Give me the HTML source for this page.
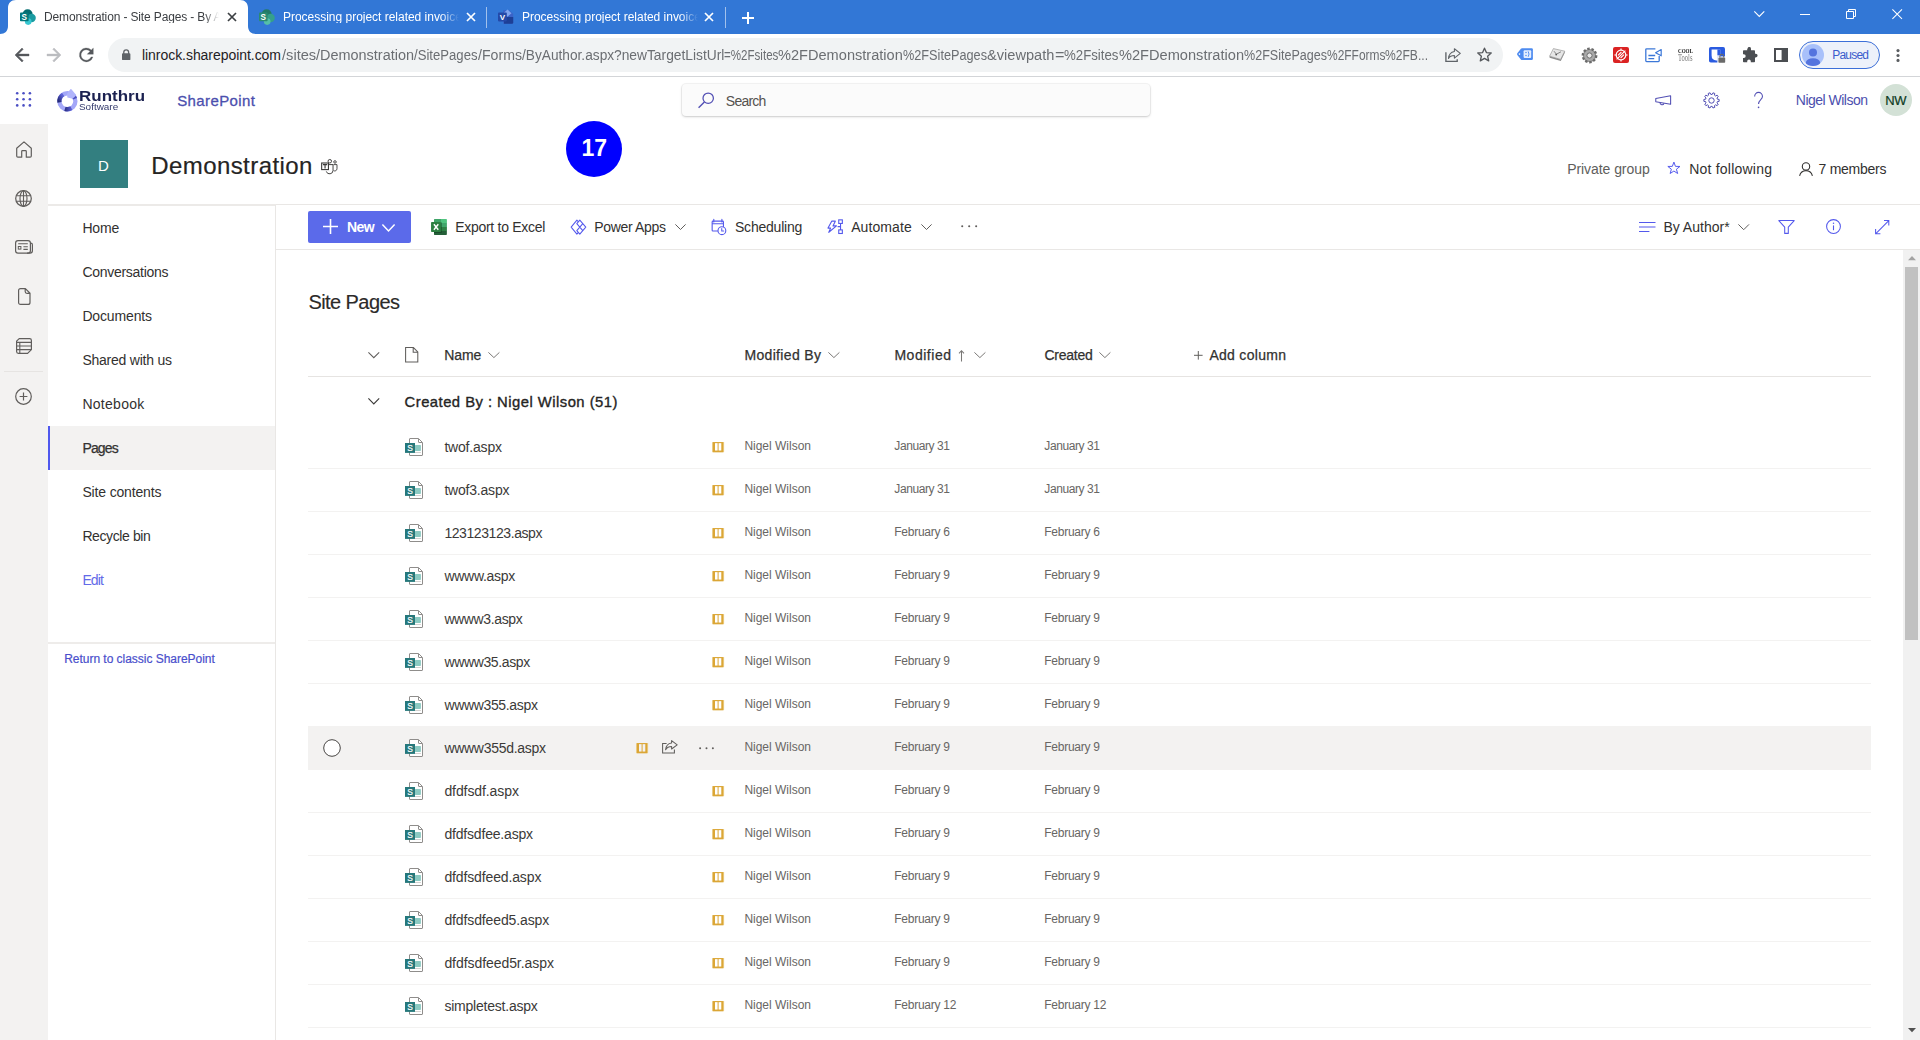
<!DOCTYPE html>
<html lang="en"><head><meta charset="utf-8"><title>Demonstration - Site Pages - By Author</title><style>
html,body{margin:0;padding:0}
body{width:1920px;height:1040px;overflow:hidden;position:relative;background:#fff;font-family:"Liberation Sans",sans-serif;}
.t{position:absolute;white-space:pre;display:block}
.a{position:absolute;display:block}
svg{position:absolute;display:block;overflow:visible}
.ln{position:absolute;height:1px;background:#edebe9}
</style></head>
<body>
<section class="browser-tabs" aria-label="Browser tabs">
<div class="a" style="left:0px;top:0px;width:1920px;height:34px;background:#3277D6"></div>
<svg style="left:0px;top:0px" width="260" height="34" viewBox="0 0 260 34" ><path d="M0 34 C5 34 8 31 8 26 L8 8 C8 3 11 0 16 0 L240 0 C245 0 248 3 248 8 L248 26 C248 31 251 34 256 34 Z" fill="#fff"/></svg>
<svg style="left:20px;top:9px" width="16" height="16" viewBox="0 0 16 16" ><circle cx="7.6" cy="5.2" r="5" fill="#036C70"/><circle cx="11.6" cy="9" r="4.2" fill="#1A9BA1"/><circle cx="8.2" cy="12.6" r="3.3" fill="#37C6D0"/><rect x="0" y="3.6" width="8.6" height="8.6" rx="0.8" fill="#03787C"/><text x="4.3" y="10.9" font-size="8.2" font-weight="700" text-anchor="middle" fill="#fff" font-family="Liberation Sans, sans-serif">S</text></svg>
<svg style="left:258.5px;top:9px" width="16" height="16" viewBox="0 0 16 16" ><circle cx="7.6" cy="5.2" r="5" fill="#237a66"/><circle cx="11.6" cy="9" r="4.2" fill="#35a08a"/><circle cx="8.2" cy="12.6" r="3.3" fill="#55bfa8"/><rect x="0" y="3.6" width="8.6" height="8.6" rx="0.8" fill="#2b8b72"/><text x="4.3" y="10.9" font-size="8.2" font-weight="700" text-anchor="middle" fill="#fff" font-family="Liberation Sans, sans-serif">S</text></svg>
<svg style="left:497.5px;top:9px" width="16" height="16" viewBox="0 0 16 16" ><path d="M5 1.2 H11.2 L15.2 5 V13.6 Q15.2 14.8 14 14.8 H5 Z" fill="#3A63C8"/><path d="M9.5 0.6 L13.5 4.2 L9.5 7.8 L5.5 4.2Z" fill="#7FA3EE"/><path d="M6 8 H15.2 V13.6 Q15.2 14.8 14 14.8 H6 Z" fill="#1D3F96"/><rect x="0" y="3.6" width="8.8" height="8.8" rx="0.8" fill="#2449A8"/><text x="4.4" y="10.9" font-size="8" font-weight="700" text-anchor="middle" fill="#fff" font-family="Liberation Sans, sans-serif">V</text></svg>
<span class="t" style="left:44px;top:10.84px;font-size:12px;line-height:12px;color:#3b3e42;letter-spacing:-0.14px;width:176px;-webkit-mask-image:linear-gradient(90deg,#000 0,#000 160px,transparent 175px);mask-image:linear-gradient(90deg,#000 0,#000 160px,transparent 175px);overflow:hidden;">Demonstration - Site Pages - By Author</span>
<span class="t" style="left:283px;top:10.84px;font-size:12px;line-height:12px;color:#ffffff;letter-spacing:-0.018px;width:176px;-webkit-mask-image:linear-gradient(90deg,#000 0,#000 158px,transparent 176px);mask-image:linear-gradient(90deg,#000 0,#000 158px,transparent 176px);overflow:hidden;">Processing project related invoices</span>
<span class="t" style="left:522px;top:10.84px;font-size:12px;line-height:12px;color:#ffffff;letter-spacing:-0.018px;width:176px;-webkit-mask-image:linear-gradient(90deg,#000 0,#000 158px,transparent 176px);mask-image:linear-gradient(90deg,#000 0,#000 158px,transparent 176px);overflow:hidden;">Processing project related invoices</span>
<svg style="left:228.2px;top:13px" width="8" height="8" viewBox="0 0 8 8" ><path d="M0 0 L8 8 M8 0 L0 8" stroke="#3c4043" stroke-width="1.7" fill="none"/></svg>
<svg style="left:467px;top:13px" width="8" height="8" viewBox="0 0 8 8" ><path d="M0 0 L8 8 M8 0 L0 8" stroke="#ffffff" stroke-width="1.7" fill="none"/></svg>
<svg style="left:705.4px;top:13px" width="8" height="8" viewBox="0 0 8 8" ><path d="M0 0 L8 8 M8 0 L0 8" stroke="#ffffff" stroke-width="1.7" fill="none"/></svg>
<div class="a" style="left:486px;top:7px;width:1px;height:20.5px;background:rgba(255,255,255,.55)"></div>
<div class="a" style="left:725px;top:7px;width:1px;height:20.5px;background:rgba(255,255,255,.55)"></div>
<svg style="left:741.5px;top:11.5px" width="12" height="12" viewBox="0 0 12 12" ><path d="M6 0 V12 M0 6 H12" stroke="#fff" stroke-width="2" fill="none"/></svg>
<svg style="left:1754px;top:11px" width="10.6" height="6" viewBox="0 0 10.6 6" ><path d="M0.3 0.4 L5.3 5.5 L10.3 0.4" stroke="#fff" stroke-width="1.1" fill="none"/></svg>
<div class="a" style="left:1800px;top:14px;width:10px;height:1px;background:#fff"></div>
<svg style="left:1846px;top:9px" width="10" height="10" viewBox="0 0 10 10" ><path d="M0.5 2.5 H7.5 V9.5 H0.5 Z M2.5 2.5 V0.5 H9.5 V7.5 H7.5" stroke="#fff" stroke-width="1" fill="none"/></svg>
<svg style="left:1891.8px;top:8.8px" width="10.4" height="10.4" viewBox="0 0 10.4 10.4" ><path d="M0.4 0.4 L10 10 M10 0.4 L0.4 10" stroke="#fff" stroke-width="1.05" fill="none"/></svg>
</section>
<section class="browser-toolbar" aria-label="Browser toolbar">
<div class="a" style="left:0px;top:76px;width:1920px;height:1px;background:#d3d5d8"></div>
<svg style="left:15px;top:48px" width="14" height="14" viewBox="0 0 14 14" ><path d="M14 6.1 H3.4 L8.2 1.3 L7 0 L0 7 L7 14 L8.2 12.7 L3.4 7.9 H14 Z" fill="#55585c" stroke="#55585c" stroke-width="0.45" stroke-linejoin="round"/></svg>
<svg style="left:47px;top:48px" width="14" height="14" viewBox="0 0 14 14" ><path d="M0 6.1 H10.6 L5.8 1.3 L7 0 L14 7 L7 14 L5.8 12.7 L10.6 7.9 H0 Z" fill="#bbbdc0" stroke="#bbbdc0" stroke-width="0.45" stroke-linejoin="round"/></svg>
<svg style="left:78.9px;top:47.8px" width="14.3" height="14.3" viewBox="0 0 15 15" ><path d="M12.9 2.2 A7.3 7.3 0 1 0 14.6 9.4 H12.7 A5.5 5.5 0 1 1 11.6 3.5 L8.6 6.5 H15 V0.1 Z" fill="#55585c" stroke="#55585c" stroke-width="0.3"/></svg>
<div class="a" style="left:108px;top:38px;width:1395px;height:34px;background:#f1f3f4;border-radius:17px"></div>
<svg style="left:121.9px;top:49px" width="8.4" height="11.6" viewBox="0 0 9 11.8" ><path d="M1.2 4.3 V3.1 A3.3 3.1 0 0 1 7.8 3.1 V4.3 H8 Q9 4.3 9 5.3 V10.6 Q9 11.6 8 11.6 H1 Q0 11.6 0 10.6 V5.3 Q0 4.3 1 4.3 Z M2.6 4.3 H6.4 V3.1 A1.9 1.8 0 0 0 2.6 3.1 Z" fill="#5f6368" fill-rule="evenodd"/></svg>
<span class="t" style="left:142px;top:48.15px;font-size:14px;line-height:14px;color:#1f2124;letter-spacing:-0.051px;">linrock.sharepoint.com</span>
<span class="t" style="left:281.8px;top:48.15px;font-size:14px;line-height:14px;color:#6b6e72;transform:scaleX(1.0463);transform-origin:0 0;">/sites</span>
<span class="t" style="left:316px;top:48.15px;font-size:14px;line-height:14px;color:#6b6e72;transform:scaleX(1.0323);transform-origin:0 0;">/Demonstration</span>
<span class="t" style="left:414px;top:48.15px;font-size:14px;line-height:14px;color:#6b6e72;transform:scaleX(0.9377);transform-origin:0 0;">/SitePages</span>
<span class="t" style="left:477.5px;top:48.15px;font-size:14px;line-height:14px;color:#6b6e72;transform:scaleX(1.0100);transform-origin:0 0;">/Forms</span>
<span class="t" style="left:521.5px;top:48.15px;font-size:14px;line-height:14px;color:#6b6e72;transform:scaleX(0.9780);transform-origin:0 0;">/ByAuthor.aspx</span>
<span class="t" style="left:613.6px;top:48.15px;font-size:14px;line-height:14px;color:#6b6e72;transform:scaleX(0.9852);transform-origin:0 0;">?newTargetListUrl</span>
<span class="t" style="left:724px;top:48.15px;font-size:14px;line-height:14px;color:#6b6e72;transform:scaleX(0.8274);transform-origin:0 0;">=%2Fsites</span>
<span class="t" style="left:778.4px;top:48.15px;font-size:14px;line-height:14px;color:#6b6e72;transform:scaleX(1.0415);transform-origin:0 0;">%2FDemonstration</span>
<span class="t" style="left:903.2px;top:48.15px;font-size:14px;line-height:14px;color:#6b6e72;transform:scaleX(0.9070);transform-origin:0 0;">%2FSitePages</span>
<span class="t" style="left:987.2px;top:48.15px;font-size:14px;line-height:14px;color:#6b6e72;transform:scaleX(1.0419);transform-origin:0 0;">&amp;viewpath</span>
<span class="t" style="left:1054.5px;top:48.15px;font-size:14px;line-height:14px;color:#6b6e72;transform:scaleX(1.1603);transform-origin:0 0;">=</span>
<span class="t" style="left:1064px;top:48.15px;font-size:14px;line-height:14px;color:#6b6e72;transform:scaleX(0.9465);transform-origin:0 0;">%2Fsites</span>
<span class="t" style="left:1118.5px;top:48.15px;font-size:14px;line-height:14px;color:#6b6e72;transform:scaleX(1.0432);transform-origin:0 0;">%2FDemonstration</span>
<span class="t" style="left:1243.5px;top:48.15px;font-size:14px;line-height:14px;color:#6b6e72;transform:scaleX(0.8962);transform-origin:0 0;">%2FSitePages</span>
<span class="t" style="left:1326.5px;top:48.15px;font-size:14px;line-height:14px;color:#6b6e72;transform:scaleX(0.8546);transform-origin:0 0;">%2FForms</span>
<span class="t" style="left:1385px;top:48.15px;font-size:14px;line-height:14px;color:#6b6e72;transform:scaleX(0.8635);transform-origin:0 0;">%2FB...</span>
<svg style="left:1445.4px;top:48px" width="16" height="15" viewBox="0 0 16 15" ><path d="M0.9 4.2 V13.4 H12.2 V11.3" stroke="#5f6368" stroke-width="1.35" fill="none"/><path d="M9.4 0.7 L15.3 5.4 L9.4 10.1 V7.5 C6.6 7.5 4.6 8.3 3.5 10.5 C3.8 6.7 6 4.1 9.4 3.5 Z" stroke="#5f6368" stroke-width="1.1" fill="none" stroke-linejoin="round"/></svg>
<svg style="left:1477.3px;top:47px" width="15" height="15" viewBox="0 0 15 15" ><path d="M7.5 1.2 L9.4 5.6 L14.2 6 L10.6 9.2 L11.7 13.9 L7.5 11.4 L3.3 13.9 L4.4 9.2 L0.8 6 L5.6 5.6 Z" stroke="#55585c" stroke-width="1.35" fill="none" stroke-linejoin="round"/></svg>
<svg style="left:1517px;top:48.4px" width="16" height="12.4" viewBox="0 0 16 12.4" ><path d="M5 0.2 H14.6 Q15.9 0.2 15.9 1.5 V10.7 Q15.9 12 14.6 12 H5 Q4.3 12 3.9 11.5 L0.3 6.9 Q-0.2 6.1 0.3 5.3 L3.9 0.7 Q4.3 0.2 5 0.2 Z" fill="#4d8bf0"/><circle cx="2.5" cy="6.1" r="0.8" fill="#fff"/><rect x="6.6" y="2.2" width="7.6" height="7.8" rx="1" fill="#e4eeff"/><circle cx="9" cy="4.6" r="0.75" fill="#4d8bf0"/><circle cx="9" cy="7.6" r="0.75" fill="#4d8bf0"/><path d="M11.2 3.4 Q12.8 6.1 11.2 8.8" stroke="#4d8bf0" stroke-width="0.95" fill="none"/></svg>
<svg style="left:1549px;top:48px" width="16.4" height="13.4" viewBox="0 0 16.4 13.4" ><path d="M4.4 0.6 L15.8 3.2 L11.6 11.4 L0.6 8.2 Z" fill="#e6e6e6" stroke="#9a9a9a" stroke-width="0.7"/><path d="M0.6 8.2 L11.6 11.4 L15.8 3.2 L15.8 4.8 L11.8 13 L0.6 9.8 Z" fill="#8c8c8c"/><path d="M5 3.2 L7.4 6.2 L12 3.8" stroke="#777" stroke-width="0.9" fill="none"/><circle cx="7.2" cy="6.6" r="0.9" fill="#555"/></svg>
<svg style="left:1581px;top:47px" width="17" height="17" viewBox="0 0 17 17" ><circle cx="8.5" cy="8.5" r="6.6" fill="#8f8f8f" stroke="#6b6b6b" stroke-width="2.6" stroke-dasharray="2.4 1.7"/><circle cx="8.5" cy="8.5" r="5.4" fill="#a9a9a9"/><circle cx="8.5" cy="8.5" r="2.6" fill="#e8e8e8" stroke="#6f6f6f" stroke-width="1"/></svg>
<svg style="left:1613px;top:47px" width="16" height="16" viewBox="0 0 16 16" ><rect width="16" height="16" rx="2" fill="#DB2323"/><circle cx="8" cy="8" r="4.8" stroke="#fff" stroke-width="1.2" fill="none"/><path d="M3.6 12.4 L12.4 3.6 M5 8.4 L8.4 5 M7.6 11 L11 7.6 M8 1.4 V3 M8 13 V14.6 M1.4 8 H3 M13 8 H14.6" stroke="#fff" stroke-width="1.1"/></svg>
<svg style="left:1644.6px;top:47.8px" width="17" height="14.4" viewBox="0 0 17 14.4" ><path d="M10.4 0.8 H1.6 Q0.8 0.8 0.8 1.6 V12.8 Q0.8 13.6 1.6 13.6 H13.4 Q14.2 13.6 14.2 12.8 V8" stroke="#3c78d8" stroke-width="1.3" fill="none"/><path d="M16.2 1.6 V7.8 L10.6 4.7 Z" stroke="#3c78d8" stroke-width="1.2" fill="#fff" stroke-linejoin="round"/><path d="M3.4 7.5 H10.2 M3.4 10.7 H9.2" stroke="#3c78d8" stroke-width="1.3"/></svg>
<span class="t" style="left:1677.6px;top:47.6px;font-size:6.2px;line-height:6.2px;font-weight:700;color:#111;transform:scaleX(0.82);transform-origin:0 0;font-family:'Liberation Serif',serif">COOL</span>
<span class="t" style="left:1678px;top:53.6px;font-size:9.4px;line-height:9.4px;color:#7a7a7a;transform:scaleX(0.70);transform-origin:0 0;font-family:'Liberation Serif',serif">Tools</span>
<svg style="left:1709px;top:47px" width="16.4" height="16" viewBox="0 0 16.4 16" ><rect x="0" y="0" width="16" height="15.6" rx="1.8" fill="#2a5be0"/><path d="M2.6 2.4 H11.2 V9.4 H8.6 V13.4 H7.4 Q2.6 13.4 2.6 8.6 Z" fill="#fff"/><rect x="8.4" y="2.4" width="2.8" height="6" fill="#2a5be0"/><rect x="8.4" y="9.4" width="8" height="6.6" fill="#fff"/><rect x="9.4" y="10.4" width="6.8" height="5.4" rx="0.7" fill="#6a6a6a"/><path d="M10.9 10.4 V9.2 A1.9 1.9 0 0 1 14.7 9.2 V10.4" stroke="#6a6a6a" stroke-width="1.1" fill="none"/></svg>
<svg style="left:1741.5px;top:47.5px" width="15" height="15" viewBox="0 0 15 15" ><path d="M5.6 0.4 A1.7 1.7 0 0 1 9 0.9 V2.2 H12.2 Q13 2.2 13 3 V5.8 H13.8 A1.8 1.8 0 0 1 13.8 9.4 H13 V13.4 Q13 14.2 12.2 14.2 H8.8 V13.2 A1.8 1.8 0 0 0 5.2 13.2 V14.2 H1.8 Q1 14.2 1 13.4 V10 H1.8 A1.9 1.9 0 0 0 1.8 6.2 H1 V3 Q1 2.2 1.8 2.2 H5.2 V0.9 Z" fill="#4b4e52"/></svg>
<svg style="left:1774px;top:48px" width="14" height="14" viewBox="0 0 14 14" ><path d="M1 1 H13 V13 H1 Z" stroke="#4b4e52" stroke-width="2" fill="none"/><rect x="7.6" y="1" width="5.4" height="12" fill="#4b4e52"/></svg>
<div class="a" style="left:1799px;top:41px;width:81px;height:27.5px;background:#edf1fa;border:1.2px solid #3c6fd8;border-radius:14px;box-sizing:border-box"></div>
<svg style="left:1802px;top:43.8px" width="22" height="22" viewBox="0 0 22 22" ><defs><clipPath id="avc"><circle cx="11" cy="11" r="11"/></clipPath></defs><circle cx="11" cy="11" r="11" fill="#a8c0fa"/><circle cx="11" cy="8.4" r="4" fill="#5474de"/><ellipse cx="11" cy="19" rx="7.2" ry="4.8" fill="#5474de" clip-path="url(#avc)"/></svg>
<span class="t" style="left:1832.3px;top:49.14px;font-size:12px;line-height:12px;color:#3a5ccc;letter-spacing:-0.801px;">Paused</span>
<svg style="left:1896.4px;top:49px" width="4" height="13" viewBox="0 0 4 13" ><circle cx="2" cy="1.6" r="1.55" fill="#5a5d61"/><circle cx="2" cy="6.5" r="1.55" fill="#5a5d61"/><circle cx="2" cy="11.4" r="1.55" fill="#5a5d61"/></svg>
</section>
<section class="suite-header" aria-label="SharePoint suite bar">
<svg style="left:16px;top:92.3px" width="15.2" height="14.8" viewBox="0 0 15.2 14.8" ><circle cx="1.2" cy="1.2" r="1.3" fill="#4b4fc4"/><circle cx="1.2" cy="7.3" r="1.3" fill="#4b4fc4"/><circle cx="1.2" cy="13.4" r="1.3" fill="#4b4fc4"/><circle cx="7.55" cy="1.2" r="1.3" fill="#4b4fc4"/><circle cx="7.55" cy="7.3" r="1.3" fill="#4b4fc4"/><circle cx="7.55" cy="13.4" r="1.3" fill="#4b4fc4"/><circle cx="13.9" cy="1.2" r="1.3" fill="#4b4fc4"/><circle cx="13.9" cy="7.3" r="1.3" fill="#4b4fc4"/><circle cx="13.9" cy="13.4" r="1.3" fill="#4b4fc4"/></svg>
<svg style="left:56.5px;top:88.5px" width="21" height="23" viewBox="0 0 21 23" ><defs><linearGradient id="rg1" x1="0" y1="1" x2="0.6" y2="0"><stop offset="0" stop-color="#232878"/><stop offset="1" stop-color="#5d62d6"/></linearGradient><linearGradient id="rg2" x1="0" y1="0" x2="1" y2="0"><stop offset="0" stop-color="#2a2f86"/><stop offset="1" stop-color="#5c61d4"/></linearGradient></defs><circle cx="10.4" cy="12.25" r="8" stroke="#a3a7f8" stroke-width="4.3" fill="none"/><path d="M2.48 13.36 A8 8 0 0 1 6.16 5.47" stroke="url(#rg1)" stroke-width="4.3" fill="none"/><path d="M7.93 19.86 A8 8 0 0 0 14.40 19.18" stroke="url(#rg2)" stroke-width="4.3" fill="none"/><path d="M16.53 7.11 A8 8 0 0 1 18.01 9.78" stroke="#4a4fc0" stroke-width="4.3" fill="none"/><path d="M10 4.6 L13.4 0.3 Q14 -0.2 14.6 0.5 L19.4 6.2 L15.6 9.8 L10.4 8.6 Z" fill="#b0b4fb"/></svg>
<span class="t" style="left:78.6px;top:89.31px;font-size:14.4px;line-height:14.4px;color:#1b2150;font-weight:700;transform:scaleX(1.1796);transform-origin:0 0;">Runthru</span>
<span class="t" style="left:79.2px;top:103.25px;font-size:8.8px;line-height:8.8px;color:#333a6c;transform:scaleX(1.1291);transform-origin:0 0;">Software</span>
<span class="t" style="left:177.2px;top:92.9px;font-size:15px;line-height:15px;color:#4b4fae;letter-spacing:0.398px;-webkit-text-stroke:0.3px #4b4fae;">SharePoint</span>
<div class="a" style="left:682px;top:84px;width:468px;height:32px;background:#fbfbfb;border-radius:4px;box-shadow:0 0 0 1px rgba(0,0,0,.04),0 1px 2.5px rgba(0,0,0,.18)"></div>
<svg style="left:697.5px;top:92px" width="16.5" height="16.5" viewBox="0 0 16.5 16.5" ><circle cx="10.2" cy="6.2" r="5.2" stroke="#524fb4" stroke-width="1.25" fill="none"/><path d="M6.4 10 L0.6 15.8" stroke="#524fb4" stroke-width="1.4"/></svg>
<span class="t" style="left:725.8px;top:94.45px;font-size:14px;line-height:14px;color:#55524f;letter-spacing:-0.752px;">Search</span>
<svg style="left:1654.6px;top:94.6px" width="16.4" height="11.6" viewBox="0 0 17 12" ><path d="M16.2 0.8 V9.6 L0.8 6.9 V3.6 Z" stroke="#524fb4" stroke-width="1.1" fill="none" stroke-linejoin="round"/><path d="M5.2 7.8 A2.1 2.1 0 0 0 9.3 8.6" stroke="#524fb4" stroke-width="1.1" fill="none"/></svg>
<svg style="left:1702.6px;top:91.5px" width="17" height="17" viewBox="0 0 17 17" ><path d="M9.94 0.84 L11.78 1.43 L11.46 3.18 L12.55 3.97 L14.11 3.13 L15.25 4.69 L13.96 5.91 L14.38 7.20 L16.14 7.43 L16.14 9.37 L14.38 9.60 L13.96 10.89 L15.25 12.11 L14.11 13.67 L12.55 12.83 L11.46 13.62 L11.78 15.37 L9.94 15.96 L9.18 14.36 L7.82 14.36 L7.06 15.96 L5.22 15.37 L5.54 13.62 L4.45 12.83 L2.89 13.67 L1.75 12.11 L3.04 10.89 L2.62 9.60 L0.86 9.37 L0.86 7.43 L2.62 7.20 L3.04 5.91 L1.75 4.69 L2.89 3.13 L4.45 3.97 L5.54 3.18 L5.22 1.43 L7.06 0.84 L7.82 2.44 L9.18 2.44Z" stroke="#524fb4" stroke-width="1.0" fill="none" stroke-linejoin="round"/><circle cx="8.5" cy="8.5" r="2.7" stroke="#524fb4" stroke-width="1.0" fill="none"/></svg>
<svg style="left:1753.8px;top:92px" width="9.3" height="16.5" viewBox="0 0 10 16.5" preserveAspectRatio="none"><path d="M0.7 4.6 A4.2 4.2 0 0 1 9.1 4.6 C9.1 7.6 4.9 7.8 4.9 12" stroke="#524fb4" stroke-width="1.15" fill="none"/><circle cx="4.9" cy="15.3" r="0.9" fill="#524fb4"/></svg>
<span class="t" style="left:1795.8px;top:93.35px;font-size:14px;line-height:14px;color:#4b4fae;letter-spacing:-0.51px;">Nigel Wilson</span>
<div class="a" style="left:1880px;top:84px;width:32px;height:32px;background:#d3e1d6;border-radius:50%"></div>
<span class="t" style="left:1885.2px;top:93.9px;font-size:13px;line-height:13px;color:#0c3a1e;letter-spacing:-0.272px;-webkit-text-stroke:0.2px #0c3a1e;">NW</span>
</section>
<section class="app-rail" aria-label="App bar">
<div class="a" style="left:0px;top:124px;width:48px;height:916px;background:#f3f2f1"></div>
<svg style="left:15.8px;top:140.6px" width="16" height="17" viewBox="0 0 16 17" ><path d="M0.7 7.2 L8 0.9 L15.3 7.2 V15 Q15.3 16.2 14.1 16.2 H10.3 V10.4 Q10.3 9.6 9.5 9.6 H6.5 Q5.7 9.6 5.7 10.4 V16.2 H1.9 Q0.7 16.2 0.7 15 Z" stroke="#605e5c" stroke-width="1.2" fill="none" stroke-linejoin="round"/></svg>
<svg style="left:15.1px;top:189.9px" width="17" height="17" viewBox="0 0 17 17" ><circle cx="8.5" cy="8.5" r="7.8" stroke="#605e5c" stroke-width="1.25" fill="none"/><ellipse cx="8.5" cy="8.5" rx="3.5" ry="7.8" stroke="#605e5c" stroke-width="1.15" fill="none"/><path d="M1.3 5.8 H15.7 M1.3 11.2 H15.7 M8.5 0.7 V16.3" stroke="#605e5c" stroke-width="1.1"/></svg>
<svg style="left:15px;top:240.3px" width="18" height="14" viewBox="0 0 18 14" ><rect x="0.6" y="0.6" width="14.8" height="12.6" rx="2.4" stroke="#605e5c" stroke-width="1.2" fill="none"/><path d="M15.4 3.2 H15.8 Q17.4 3.2 17.4 4.8 V10.8 Q17.4 13.2 15 13.2 H12" stroke="#605e5c" stroke-width="1.2" fill="none"/><rect x="3.3" y="6.5" width="2.6" height="2.6" stroke="#605e5c" stroke-width="1" fill="none"/><path d="M3.2 3.8 H12.8 M8.4 6.8 H12.8 M8.4 9.4 H12.8" stroke="#605e5c" stroke-width="1.1"/></svg>
<svg style="left:17.5px;top:288.1px" width="12.6" height="17" viewBox="0 0 12.6 17" ><path d="M2.6 0.6 H7.4 L12 5.2 V14.4 Q12 16.4 10 16.4 H2.6 Q0.6 16.4 0.6 14.4 V2.6 Q0.6 0.6 2.6 0.6 Z M7.2 0.8 V3.6 Q7.2 5.4 9 5.4 H11.8" stroke="#605e5c" stroke-width="1.2" fill="none" stroke-linejoin="round"/></svg>
<svg style="left:16px;top:337.7px" width="16" height="16" viewBox="0 0 16 16" ><path d="M3.2 0.6 H13.6 Q15.4 0.6 15.4 2.4 V11.6 L11.6 15.4 H2.4 Q0.6 15.4 0.6 13.6 V3.2 Z" stroke="#605e5c" stroke-width="1.2" fill="none" stroke-linejoin="round"/><path d="M0.8 4.4 H15.2 M0.8 8 H15.2 M0.8 11.6 H15 M3.8 4.4 V15.2" stroke="#605e5c" stroke-width="1.1" fill="none"/></svg>
<div class="a" style="left:4px;top:371px;width:39px;height:1px;background:#e6e4e2"></div>
<svg style="left:14.9px;top:387.9px" width="17" height="17" viewBox="0 0 17 17" ><circle cx="8.5" cy="8.5" r="7.8" stroke="#605e5c" stroke-width="1.2" fill="none"/><path d="M8.5 4.6 V12.4 M4.6 8.5 H12.4" stroke="#605e5c" stroke-width="1.2"/></svg>
</section>
<section class="site-header" aria-label="Site header">
<div class="a" style="left:48px;top:204px;width:1872px;height:1px;background:#e9e7e5"></div>
<div class="a" style="left:48px;top:204px;width:228px;height:2px;background:#eceae8"></div>
<div class="a" style="left:80px;top:140px;width:48px;height:48px;background:#337f80"></div>
<span class="t" style="left:98.1px;top:157.8px;font-size:15px;line-height:15px;color:#ffffff;">D</span>
<span class="t" style="left:151.2px;top:153.68px;font-size:24px;line-height:24px;color:#252423;letter-spacing:0.427px;-webkit-text-stroke:0.2px #252423;">Demonstration</span>
<svg style="left:321px;top:158.6px" width="16.6" height="15.4" viewBox="0 0 16.6 15.4" ><circle cx="8.8" cy="2.25" r="1.75" stroke="#3b3a39" stroke-width="0.95" fill="none"/><circle cx="14" cy="2.95" r="1.25" stroke="#3b3a39" stroke-width="0.9" fill="none"/><path d="M7.9 5.6 H12.05 V11.4 A3.45 3.45 0 0 1 5.3 12.4" stroke="#3b3a39" stroke-width="0.95" fill="none"/><path d="M12.5 5.6 H16 V9.7 A2.2 2.2 0 0 1 12.6 11.6" stroke="#3b3a39" stroke-width="0.9" fill="none"/><rect x="0.65" y="4" width="6.8" height="6.6" fill="#fff" stroke="#3b3a39" stroke-width="1.1"/><path d="M1.9 5.7 H6.2 M4.05 5.7 V9.5" stroke="#3b3a39" stroke-width="1.15" fill="none"/></svg>
<div class="a" style="left:566px;top:120.8px;width:56px;height:56px;background:#0000ff;border-radius:50%"></div>
<span class="t" style="left:581.4px;top:136.73px;font-size:23px;line-height:23px;color:#ffffff;font-weight:700;">17</span>
<span class="t" style="left:1567.2px;top:161.75px;font-size:14px;line-height:14px;color:#605e5c;letter-spacing:-0.065px;">Private group</span>
<svg style="left:1666.5px;top:161.4px" width="13.8" height="13.6" viewBox="0 0 14.5 14" ><path d="M7.25 1 L8.9 5.5 L13.6 5.6 L9.9 8.5 L11.2 13 L7.25 10.4 L3.3 13 L4.6 8.5 L0.9 5.6 L5.6 5.5 Z" stroke="#5459ec" stroke-width="1.05" fill="none" stroke-linejoin="miter"/></svg>
<span class="t" style="left:1689.2px;top:161.75px;font-size:14px;line-height:14px;color:#323130;letter-spacing:0.22px;">Not following</span>
<svg style="left:1799px;top:161.8px" width="14" height="14" viewBox="0 0 14 14" ><circle cx="7" cy="4.4" r="3.7" stroke="#323130" stroke-width="1.1" fill="none"/><path d="M0.6 13.8 A6.6 6.6 0 0 1 13.4 13.8" stroke="#323130" stroke-width="1.1" fill="none"/></svg>
<span class="t" style="left:1818.6px;top:161.75px;font-size:14px;line-height:14px;color:#323130;letter-spacing:-0.279px;">7 members</span>
</section>
<section class="left-nav" aria-label="Site navigation">
<div class="a" style="left:275px;top:205px;width:1px;height:835px;background:#e9e7e5"></div>
<div class="a" style="left:48px;top:426px;width:227px;height:44px;background:#f3f2f1"></div>
<div class="a" style="left:48px;top:426px;width:2px;height:44px;background:#4f58ee"></div>
<span class="t" style="left:82.4px;top:220.75px;font-size:14px;line-height:14px;color:#323130;letter-spacing:-0.153px;">Home</span>
<span class="t" style="left:82.4px;top:264.75px;font-size:14px;line-height:14px;color:#323130;letter-spacing:-0.275px;">Conversations</span>
<span class="t" style="left:82.4px;top:308.75px;font-size:14px;line-height:14px;color:#323130;letter-spacing:-0.139px;">Documents</span>
<span class="t" style="left:82.4px;top:352.75px;font-size:14px;line-height:14px;color:#323130;letter-spacing:-0.231px;">Shared with us</span>
<span class="t" style="left:82.4px;top:396.75px;font-size:14px;line-height:14px;color:#323130;letter-spacing:0.28px;">Notebook</span>
<span class="t" style="left:82.4px;top:440.75px;font-size:14px;line-height:14px;color:#323130;letter-spacing:-0.826px;-webkit-text-stroke:0.25px #323130;">Pages</span>
<span class="t" style="left:82.4px;top:484.75px;font-size:14px;line-height:14px;color:#323130;letter-spacing:-0.153px;">Site contents</span>
<span class="t" style="left:82.4px;top:528.75px;font-size:14px;line-height:14px;color:#323130;letter-spacing:-0.397px;">Recycle bin</span>
<span class="t" style="left:82.4px;top:572.75px;font-size:14px;line-height:14px;color:#636ae8;letter-spacing:-0.908px;">Edit</span>
<div class="a" style="left:48px;top:642px;width:227px;height:2px;background:#eeecea"></div>
<span class="t" style="left:64.2px;top:653.14px;font-size:12px;line-height:12px;color:#4a4fcc;letter-spacing:-0.03px;-webkit-text-stroke:0.2px #4a4fcc;">Return to classic SharePoint</span>
</section>
<section class="command-bar" aria-label="Command bar">
<div class="a" style="left:276px;top:249px;width:1644px;height:1px;background:#e9e7e5"></div>
<div class="a" style="left:308px;top:211px;width:103px;height:32px;background:#5B6AEA;border-radius:2px"></div>
<svg style="left:323px;top:219px" width="15" height="15" viewBox="0 0 15 15" ><path d="M7.5 0 V15 M0 7.5 H15" stroke="#fff" stroke-width="1.6"/></svg>
<span class="t" style="left:347px;top:220.15px;font-size:14px;line-height:14px;color:#ffffff;font-weight:700;letter-spacing:-0.598px;">New</span>
<svg style="left:382.4px;top:224.2px" width="13" height="7.4" viewBox="0 0 13 7.4" ><path d="M0.4 0.4 L6.5 6.9 L12.6 0.4" stroke="#fff" stroke-width="1.5" fill="none"/></svg>
<svg style="left:431px;top:219px" width="16" height="16" viewBox="0 0 16 16" ><defs><clipPath id="xlc"><rect x="2.95" y="0" width="12.95" height="15.9" rx="0.7"/></clipPath></defs><g clip-path="url(#xlc)"><rect x="2.95" y="0" width="7.05" height="4" fill="#3fa468"/><rect x="10" y="0" width="6" height="4" fill="#50c47f"/><rect x="2.95" y="4" width="7.05" height="4" fill="#2b8349"/><rect x="10" y="4" width="6" height="4" fill="#41a66b"/><rect x="2.95" y="8" width="7.05" height="4" fill="#1e6435"/><rect x="10" y="8" width="6" height="4" fill="#2e8145"/><rect x="2.95" y="12" width="13" height="4" fill="#245f38"/><rect x="2.95" y="12.9" width="7.8" height="0.9" fill="#143d22" opacity="0.7"/><rect x="9.9" y="3.4" width="0.9" height="9.6" fill="#143d22" opacity="0.55"/></g><rect x="0.05" y="2.95" width="9.85" height="9.95" rx="0.7" fill="#2c7f41"/><path d="M2.9 5.2 L7.3 10.8 M7.3 5.2 L2.9 10.8" stroke="#fff" stroke-width="1.45"/></svg>
<span class="t" style="left:455.2px;top:220.15px;font-size:14px;line-height:14px;color:#323130;letter-spacing:-0.283px;">Export to Excel</span>
<svg style="left:569.5px;top:218.8px" width="17" height="16.4" viewBox="0 0 17 16.4" ><path d="M8.1 2.5 L6.9 1.1 L1.15 8.1 L6.9 15.15 L8.1 13.7 M6.8 4.6 L9.8 1.1 L15.8 8.1 L9.8 15.15 L6.8 11.6 L12.8 4.6 M6.8 4.6 L12.8 11.6" stroke="#5459ec" stroke-width="1.05" fill="none" stroke-linejoin="round" stroke-linecap="round"/></svg>
<span class="t" style="left:594.2px;top:220.15px;font-size:14px;line-height:14px;color:#323130;letter-spacing:-0.324px;">Power Apps</span>
<svg style="left:675.4px;top:224.4px" width="11" height="6" viewBox="0 0 11 6" ><path d="M0.4 0.4 L5.5 5.5 L10.6 0.4" stroke="#605e5c" stroke-width="1" fill="none"/></svg>
<svg style="left:711.1px;top:218.8px" width="16" height="16.4" viewBox="0 0 16 16.4" ><path d="M6.6 11.95 H1.95 Q1.15 11.95 1.15 11.15 V2.95 Q1.15 2.15 1.95 2.15 H11.65 Q12.45 2.15 12.45 2.95 V7.4 M1.15 4.8 H12.45 M2.8 0.3 V2.9 M10.9 0.3 V2.9" stroke="#5459ec" stroke-width="1.1" fill="none" stroke-linecap="round"/><circle cx="10.9" cy="11.7" r="3.9" stroke="#5459ec" stroke-width="1.1" fill="#fff"/><path d="M10.75 9.5 V12 H12.7" stroke="#5459ec" stroke-width="1.05" fill="none" stroke-linecap="round"/></svg>
<span class="t" style="left:735px;top:220.15px;font-size:14px;line-height:14px;color:#323130;letter-spacing:-0.22px;">Scheduling</span>
<svg style="left:827px;top:218.8px" width="16.4" height="15.6" viewBox="0 0 16.4 15.6" ><path d="M4.7 2.15 H8.3 L6 6.9 H9.5 L1.8 13.3 L3.6 9.1 H1 Z" stroke="#5459ec" stroke-width="1.1" fill="none" stroke-linejoin="round"/><rect x="11.75" y="0.85" width="3.6" height="3.6" stroke="#5459ec" stroke-width="1.1" fill="none"/><rect x="11.75" y="10.9" width="3.6" height="3.6" stroke="#5459ec" stroke-width="1.1" fill="none"/><path d="M13.55 4.45 V10.9 M10.6 7.6 H13.55" stroke="#5459ec" stroke-width="1.1"/></svg>
<span class="t" style="left:851.2px;top:220.15px;font-size:14px;line-height:14px;color:#323130;letter-spacing:0.095px;">Automate</span>
<svg style="left:921px;top:224.4px" width="11" height="6" viewBox="0 0 11 6" ><path d="M0.4 0.4 L5.5 5.5 L10.6 0.4" stroke="#605e5c" stroke-width="1" fill="none"/></svg>
<svg style="left:960.5px;top:225.1px" width="16.4" height="2.4" viewBox="0 0 16.4 2.4" ><circle cx="1.2" cy="1.2" r="1.05" fill="#605e5c"/><circle cx="8.2" cy="1.2" r="1.05" fill="#605e5c"/><circle cx="15.2" cy="1.2" r="1.05" fill="#605e5c"/></svg>
<svg style="left:1639px;top:221.5px" width="16.5" height="10" viewBox="0 0 16.5 10" ><path d="M0 0.5 H16.5 M0 5 H16.5 M0 9.5 H10.4" stroke="#5459ec" stroke-width="1.05"/></svg>
<span class="t" style="left:1663.4px;top:219.95px;font-size:14px;line-height:14px;color:#323130;letter-spacing:0.005px;">By Author*</span>
<svg style="left:1738.4px;top:224.4px" width="11.4" height="6.2" viewBox="0 0 11.4 6.2" ><path d="M0.4 0.4 L5.7 5.7 L11 0.4" stroke="#605e5c" stroke-width="1" fill="none"/></svg>
<svg style="left:1777.6px;top:219.8px" width="17" height="14.6" viewBox="0 0 17 14.6" ><path d="M0.8 0.6 H16.2 L10.3 7.2 V13.4 H6.7 V7.2 Z" stroke="#5459ec" stroke-width="1.05" fill="none" stroke-linejoin="round"/></svg>
<svg style="left:1826px;top:219.2px" width="15" height="15" viewBox="0 0 15 15" ><circle cx="7.5" cy="7.5" r="6.9" stroke="#5459ec" stroke-width="1.05" fill="none"/><path d="M7.5 6.4 V11.2" stroke="#5459ec" stroke-width="1.1"/><circle cx="7.5" cy="4.3" r="0.75" fill="#5459ec"/></svg>
<svg style="left:1875px;top:219.6px" width="14.4" height="14.4" viewBox="0 0 14.4 14.4" ><path d="M0.6 13.8 L13.8 0.6 M9 0.6 H13.8 V5.4 M0.6 9 V13.8 H5.4" stroke="#5459ec" stroke-width="1.05" fill="none"/></svg>
<div class="a" style="left:1903px;top:250px;width:17px;height:790px;background:#f1f1f1"></div>
<div class="a" style="left:1905px;top:267px;width:13px;height:373px;background:#c1c1c1"></div>
<svg style="left:1907.5px;top:256.2px" width="8" height="4.2" viewBox="0 0 8 4.2" ><path d="M0 4.2 L4 0 L8 4.2Z" fill="#a3a3a3"/></svg>
<svg style="left:1907.5px;top:1027.5px" width="8" height="4.2" viewBox="0 0 8 4.2" ><path d="M0 0 L4 4.2 L8 0Z" fill="#505050"/></svg>
</section>
<section class="list-view" aria-label="Site Pages list">
<span class="t" style="left:308.4px;top:291.67px;font-size:20px;line-height:20px;color:#2b2a29;letter-spacing:-0.57px;-webkit-text-stroke:0.15px #2b2a29;">Site Pages</span>
<svg style="left:368.2px;top:352px" width="11.6" height="6.2" viewBox="0 0 11.6 6.2" ><path d="M0.4 0.4 L5.8 5.7 L11.2 0.4" stroke="#605e5c" stroke-width="1.05" fill="none"/></svg>
<svg style="left:404.8px;top:347px" width="13.5" height="15.6" viewBox="0 0 13.5 15.6" ><path d="M0.6 0.6 H8.4 L12.8 5 V15 H0.6 Z M8.2 0.8 V5.2 H12.6" stroke="#605e5c" stroke-width="1.05" fill="none"/></svg>
<span class="t" style="left:444.2px;top:348.05px;font-size:14px;line-height:14px;color:#323130;letter-spacing:-0.053px;-webkit-text-stroke:0.25px #323130;">Name</span>
<svg style="left:488px;top:351.9px" width="11.8" height="6.1" viewBox="0 0 11.8 6.1" ><path d="M0.4 0.4 L5.9 5.6 L11.4 0.4" stroke="#7a7876" stroke-width="1" fill="none"/></svg>
<span class="t" style="left:744.4px;top:348.05px;font-size:14px;line-height:14px;color:#323130;letter-spacing:0.344px;-webkit-text-stroke:0.25px #323130;">Modified By</span>
<svg style="left:828px;top:351.9px" width="11.8" height="6.1" viewBox="0 0 11.8 6.1" ><path d="M0.4 0.4 L5.9 5.6 L11.4 0.4" stroke="#7a7876" stroke-width="1" fill="none"/></svg>
<span class="t" style="left:894.4px;top:348.05px;font-size:14px;line-height:14px;color:#323130;letter-spacing:0.525px;-webkit-text-stroke:0.25px #323130;">Modified</span>
<svg style="left:958px;top:350px" width="7" height="11.6" viewBox="0 0 7 11.6" ><path d="M3.5 11.6 V0.8 M1 3.3 L3.5 0.7 L6 3.3" stroke="#7a7876" stroke-width="1.05" fill="none"/></svg>
<svg style="left:973.9px;top:351.9px" width="11.8" height="6.1" viewBox="0 0 11.8 6.1" ><path d="M0.4 0.4 L5.9 5.6 L11.4 0.4" stroke="#7a7876" stroke-width="1" fill="none"/></svg>
<span class="t" style="left:1044.4px;top:348.05px;font-size:14px;line-height:14px;color:#323130;letter-spacing:-0.235px;-webkit-text-stroke:0.25px #323130;">Created</span>
<svg style="left:1099.3px;top:351.9px" width="11.8" height="6.1" viewBox="0 0 11.8 6.1" ><path d="M0.4 0.4 L5.9 5.6 L11.4 0.4" stroke="#7a7876" stroke-width="1" fill="none"/></svg>
<svg style="left:1193.6px;top:350.8px" width="8.6" height="8.6" viewBox="0 0 8.6 8.6" ><path d="M4.3 0 V8.6 M0 4.3 H8.6" stroke="#605e5c" stroke-width="1"/></svg>
<span class="t" style="left:1209.4px;top:348.05px;font-size:14px;line-height:14px;color:#323130;letter-spacing:0.296px;-webkit-text-stroke:0.25px #323130;">Add column</span>
<div class="a" style="left:308px;top:376px;width:1563px;height:1px;background:#e6e4e2"></div>
<svg style="left:368.2px;top:398.1px" width="11.6" height="6.5" viewBox="0 0 11.6 6.5" ><path d="M0.4 0.4 L5.8 6 L11.2 0.4" stroke="#3b3a39" stroke-width="1.1" fill="none"/></svg>
<span class="t" style="left:404.6px;top:395.27px;font-size:14.8px;line-height:14.8px;color:#252423;letter-spacing:0.475px;-webkit-text-stroke:0.35px #252423;">Created By : Nigel Wilson (51)</span>
<div class="a" style="left:308px;top:468px;width:1563px;height:1px;background:#f3f2f1"></div>
<svg style="left:405px;top:438px" width="18" height="18" viewBox="0 0 18 18" ><path d="M5 0.5 H13.5 L17.5 4.5 V17 Q17.5 17.5 17 17.5 H5 Q4.5 17.5 4.5 17 V1 Q4.5 0.5 5 0.5 Z" fill="#fff" stroke="#8f8d8b" stroke-width="1" stroke-linejoin="round"/><path d="M13.5 0.8 V4 Q13.5 4.5 14 4.5 H17.2" stroke="#8f8d8b" stroke-width="1" fill="none"/><rect x="9.9" y="7" width="6" height="5.9" rx="0.7" fill="#8ccac2"/><path d="M10 14.5 H15.9" stroke="#c8c6c4" stroke-width="0.8"/><rect x="0" y="5" width="10" height="9.9" fill="#26787b"/><text x="5" y="12.95" font-size="8.4" font-weight="400" stroke="#fff" stroke-width="0.2" text-anchor="middle" fill="#fff" font-family="Liberation Sans, sans-serif">S</text></svg>
<span class="t" style="left:444.4px;top:440.15px;font-size:14px;line-height:14px;color:#3b3a38;letter-spacing:-0.193px;">twof.aspx</span>
<svg style="left:711.7px;top:441.8px" width="12.2" height="10.4" viewBox="0 0 12.2 10.4" ><rect x="0.1" y="0.1" width="12" height="10.1" rx="0.5" fill="#e8c678"/><rect x="1" y="0.1" width="10" height="10.1" fill="#dba636"/><rect x="3" y="1.15" width="2.6" height="7.4" fill="#fff"/><rect x="6.6" y="1.15" width="2.7" height="7.4" fill="#fff"/></svg>
<span class="t" style="left:744.4px;top:439.84px;font-size:12px;line-height:12px;color:#686664;letter-spacing:-0.008px;">Nigel Wilson</span>
<span class="t" style="left:894.3px;top:439.84px;font-size:12px;line-height:12px;color:#686664;letter-spacing:-0.408px;">January 31</span>
<span class="t" style="left:1044.3px;top:439.84px;font-size:12px;line-height:12px;color:#686664;letter-spacing:-0.408px;">January 31</span>
<div class="a" style="left:308px;top:511px;width:1563px;height:1px;background:#f3f2f1"></div>
<svg style="left:405px;top:481px" width="18" height="18" viewBox="0 0 18 18" ><path d="M5 0.5 H13.5 L17.5 4.5 V17 Q17.5 17.5 17 17.5 H5 Q4.5 17.5 4.5 17 V1 Q4.5 0.5 5 0.5 Z" fill="#fff" stroke="#8f8d8b" stroke-width="1" stroke-linejoin="round"/><path d="M13.5 0.8 V4 Q13.5 4.5 14 4.5 H17.2" stroke="#8f8d8b" stroke-width="1" fill="none"/><rect x="9.9" y="7" width="6" height="5.9" rx="0.7" fill="#8ccac2"/><path d="M10 14.5 H15.9" stroke="#c8c6c4" stroke-width="0.8"/><rect x="0" y="5" width="10" height="9.9" fill="#26787b"/><text x="5" y="12.95" font-size="8.4" font-weight="400" stroke="#fff" stroke-width="0.2" text-anchor="middle" fill="#fff" font-family="Liberation Sans, sans-serif">S</text></svg>
<span class="t" style="left:444.4px;top:483.15px;font-size:14px;line-height:14px;color:#3b3a38;letter-spacing:-0.204px;">twof3.aspx</span>
<svg style="left:711.7px;top:484.8px" width="12.2" height="10.4" viewBox="0 0 12.2 10.4" ><rect x="0.1" y="0.1" width="12" height="10.1" rx="0.5" fill="#e8c678"/><rect x="1" y="0.1" width="10" height="10.1" fill="#dba636"/><rect x="3" y="1.15" width="2.6" height="7.4" fill="#fff"/><rect x="6.6" y="1.15" width="2.7" height="7.4" fill="#fff"/></svg>
<span class="t" style="left:744.4px;top:482.84px;font-size:12px;line-height:12px;color:#686664;letter-spacing:-0.008px;">Nigel Wilson</span>
<span class="t" style="left:894.3px;top:482.84px;font-size:12px;line-height:12px;color:#686664;letter-spacing:-0.408px;">January 31</span>
<span class="t" style="left:1044.3px;top:482.84px;font-size:12px;line-height:12px;color:#686664;letter-spacing:-0.408px;">January 31</span>
<div class="a" style="left:308px;top:554px;width:1563px;height:1px;background:#f3f2f1"></div>
<svg style="left:405px;top:524px" width="18" height="18" viewBox="0 0 18 18" ><path d="M5 0.5 H13.5 L17.5 4.5 V17 Q17.5 17.5 17 17.5 H5 Q4.5 17.5 4.5 17 V1 Q4.5 0.5 5 0.5 Z" fill="#fff" stroke="#8f8d8b" stroke-width="1" stroke-linejoin="round"/><path d="M13.5 0.8 V4 Q13.5 4.5 14 4.5 H17.2" stroke="#8f8d8b" stroke-width="1" fill="none"/><rect x="9.9" y="7" width="6" height="5.9" rx="0.7" fill="#8ccac2"/><path d="M10 14.5 H15.9" stroke="#c8c6c4" stroke-width="0.8"/><rect x="0" y="5" width="10" height="9.9" fill="#26787b"/><text x="5" y="12.95" font-size="8.4" font-weight="400" stroke="#fff" stroke-width="0.2" text-anchor="middle" fill="#fff" font-family="Liberation Sans, sans-serif">S</text></svg>
<span class="t" style="left:444.4px;top:526.15px;font-size:14px;line-height:14px;color:#3b3a38;letter-spacing:-0.419px;">123123123.aspx</span>
<svg style="left:711.7px;top:527.8px" width="12.2" height="10.4" viewBox="0 0 12.2 10.4" ><rect x="0.1" y="0.1" width="12" height="10.1" rx="0.5" fill="#e8c678"/><rect x="1" y="0.1" width="10" height="10.1" fill="#dba636"/><rect x="3" y="1.15" width="2.6" height="7.4" fill="#fff"/><rect x="6.6" y="1.15" width="2.7" height="7.4" fill="#fff"/></svg>
<span class="t" style="left:744.4px;top:525.84px;font-size:12px;line-height:12px;color:#686664;letter-spacing:-0.008px;">Nigel Wilson</span>
<span class="t" style="left:894.3px;top:525.84px;font-size:12px;line-height:12px;color:#686664;letter-spacing:-0.259px;">February 6</span>
<span class="t" style="left:1044.3px;top:525.84px;font-size:12px;line-height:12px;color:#686664;letter-spacing:-0.259px;">February 6</span>
<div class="a" style="left:308px;top:597px;width:1563px;height:1px;background:#f3f2f1"></div>
<svg style="left:405px;top:567px" width="18" height="18" viewBox="0 0 18 18" ><path d="M5 0.5 H13.5 L17.5 4.5 V17 Q17.5 17.5 17 17.5 H5 Q4.5 17.5 4.5 17 V1 Q4.5 0.5 5 0.5 Z" fill="#fff" stroke="#8f8d8b" stroke-width="1" stroke-linejoin="round"/><path d="M13.5 0.8 V4 Q13.5 4.5 14 4.5 H17.2" stroke="#8f8d8b" stroke-width="1" fill="none"/><rect x="9.9" y="7" width="6" height="5.9" rx="0.7" fill="#8ccac2"/><path d="M10 14.5 H15.9" stroke="#c8c6c4" stroke-width="0.8"/><rect x="0" y="5" width="10" height="9.9" fill="#26787b"/><text x="5" y="12.95" font-size="8.4" font-weight="400" stroke="#fff" stroke-width="0.2" text-anchor="middle" fill="#fff" font-family="Liberation Sans, sans-serif">S</text></svg>
<span class="t" style="left:444.4px;top:569.15px;font-size:14px;line-height:14px;color:#3b3a38;letter-spacing:-0.28px;">wwww.aspx</span>
<svg style="left:711.7px;top:570.8px" width="12.2" height="10.4" viewBox="0 0 12.2 10.4" ><rect x="0.1" y="0.1" width="12" height="10.1" rx="0.5" fill="#e8c678"/><rect x="1" y="0.1" width="10" height="10.1" fill="#dba636"/><rect x="3" y="1.15" width="2.6" height="7.4" fill="#fff"/><rect x="6.6" y="1.15" width="2.7" height="7.4" fill="#fff"/></svg>
<span class="t" style="left:744.4px;top:568.84px;font-size:12px;line-height:12px;color:#686664;letter-spacing:-0.008px;">Nigel Wilson</span>
<span class="t" style="left:894.3px;top:568.84px;font-size:12px;line-height:12px;color:#686664;letter-spacing:-0.259px;">February 9</span>
<span class="t" style="left:1044.3px;top:568.84px;font-size:12px;line-height:12px;color:#686664;letter-spacing:-0.259px;">February 9</span>
<div class="a" style="left:308px;top:640px;width:1563px;height:1px;background:#f3f2f1"></div>
<svg style="left:405px;top:610px" width="18" height="18" viewBox="0 0 18 18" ><path d="M5 0.5 H13.5 L17.5 4.5 V17 Q17.5 17.5 17 17.5 H5 Q4.5 17.5 4.5 17 V1 Q4.5 0.5 5 0.5 Z" fill="#fff" stroke="#8f8d8b" stroke-width="1" stroke-linejoin="round"/><path d="M13.5 0.8 V4 Q13.5 4.5 14 4.5 H17.2" stroke="#8f8d8b" stroke-width="1" fill="none"/><rect x="9.9" y="7" width="6" height="5.9" rx="0.7" fill="#8ccac2"/><path d="M10 14.5 H15.9" stroke="#c8c6c4" stroke-width="0.8"/><rect x="0" y="5" width="10" height="9.9" fill="#26787b"/><text x="5" y="12.95" font-size="8.4" font-weight="400" stroke="#fff" stroke-width="0.2" text-anchor="middle" fill="#fff" font-family="Liberation Sans, sans-serif">S</text></svg>
<span class="t" style="left:444.4px;top:612.15px;font-size:14px;line-height:14px;color:#3b3a38;letter-spacing:-0.378px;">wwww3.aspx</span>
<svg style="left:711.7px;top:613.8px" width="12.2" height="10.4" viewBox="0 0 12.2 10.4" ><rect x="0.1" y="0.1" width="12" height="10.1" rx="0.5" fill="#e8c678"/><rect x="1" y="0.1" width="10" height="10.1" fill="#dba636"/><rect x="3" y="1.15" width="2.6" height="7.4" fill="#fff"/><rect x="6.6" y="1.15" width="2.7" height="7.4" fill="#fff"/></svg>
<span class="t" style="left:744.4px;top:611.84px;font-size:12px;line-height:12px;color:#686664;letter-spacing:-0.008px;">Nigel Wilson</span>
<span class="t" style="left:894.3px;top:611.84px;font-size:12px;line-height:12px;color:#686664;letter-spacing:-0.259px;">February 9</span>
<span class="t" style="left:1044.3px;top:611.84px;font-size:12px;line-height:12px;color:#686664;letter-spacing:-0.259px;">February 9</span>
<div class="a" style="left:308px;top:683px;width:1563px;height:1px;background:#f3f2f1"></div>
<svg style="left:405px;top:653px" width="18" height="18" viewBox="0 0 18 18" ><path d="M5 0.5 H13.5 L17.5 4.5 V17 Q17.5 17.5 17 17.5 H5 Q4.5 17.5 4.5 17 V1 Q4.5 0.5 5 0.5 Z" fill="#fff" stroke="#8f8d8b" stroke-width="1" stroke-linejoin="round"/><path d="M13.5 0.8 V4 Q13.5 4.5 14 4.5 H17.2" stroke="#8f8d8b" stroke-width="1" fill="none"/><rect x="9.9" y="7" width="6" height="5.9" rx="0.7" fill="#8ccac2"/><path d="M10 14.5 H15.9" stroke="#c8c6c4" stroke-width="0.8"/><rect x="0" y="5" width="10" height="9.9" fill="#26787b"/><text x="5" y="12.95" font-size="8.4" font-weight="400" stroke="#fff" stroke-width="0.2" text-anchor="middle" fill="#fff" font-family="Liberation Sans, sans-serif">S</text></svg>
<span class="t" style="left:444.4px;top:655.15px;font-size:14px;line-height:14px;color:#3b3a38;letter-spacing:-0.358px;">wwww35.aspx</span>
<svg style="left:711.7px;top:656.8px" width="12.2" height="10.4" viewBox="0 0 12.2 10.4" ><rect x="0.1" y="0.1" width="12" height="10.1" rx="0.5" fill="#e8c678"/><rect x="1" y="0.1" width="10" height="10.1" fill="#dba636"/><rect x="3" y="1.15" width="2.6" height="7.4" fill="#fff"/><rect x="6.6" y="1.15" width="2.7" height="7.4" fill="#fff"/></svg>
<span class="t" style="left:744.4px;top:654.84px;font-size:12px;line-height:12px;color:#686664;letter-spacing:-0.008px;">Nigel Wilson</span>
<span class="t" style="left:894.3px;top:654.84px;font-size:12px;line-height:12px;color:#686664;letter-spacing:-0.259px;">February 9</span>
<span class="t" style="left:1044.3px;top:654.84px;font-size:12px;line-height:12px;color:#686664;letter-spacing:-0.259px;">February 9</span>
<div class="a" style="left:308px;top:726px;width:1563px;height:1px;background:#f3f2f1"></div>
<svg style="left:405px;top:696px" width="18" height="18" viewBox="0 0 18 18" ><path d="M5 0.5 H13.5 L17.5 4.5 V17 Q17.5 17.5 17 17.5 H5 Q4.5 17.5 4.5 17 V1 Q4.5 0.5 5 0.5 Z" fill="#fff" stroke="#8f8d8b" stroke-width="1" stroke-linejoin="round"/><path d="M13.5 0.8 V4 Q13.5 4.5 14 4.5 H17.2" stroke="#8f8d8b" stroke-width="1" fill="none"/><rect x="9.9" y="7" width="6" height="5.9" rx="0.7" fill="#8ccac2"/><path d="M10 14.5 H15.9" stroke="#c8c6c4" stroke-width="0.8"/><rect x="0" y="5" width="10" height="9.9" fill="#26787b"/><text x="5" y="12.95" font-size="8.4" font-weight="400" stroke="#fff" stroke-width="0.2" text-anchor="middle" fill="#fff" font-family="Liberation Sans, sans-serif">S</text></svg>
<span class="t" style="left:444.4px;top:698.15px;font-size:14px;line-height:14px;color:#3b3a38;letter-spacing:-0.342px;">wwww355.aspx</span>
<svg style="left:711.7px;top:699.8px" width="12.2" height="10.4" viewBox="0 0 12.2 10.4" ><rect x="0.1" y="0.1" width="12" height="10.1" rx="0.5" fill="#e8c678"/><rect x="1" y="0.1" width="10" height="10.1" fill="#dba636"/><rect x="3" y="1.15" width="2.6" height="7.4" fill="#fff"/><rect x="6.6" y="1.15" width="2.7" height="7.4" fill="#fff"/></svg>
<span class="t" style="left:744.4px;top:697.84px;font-size:12px;line-height:12px;color:#686664;letter-spacing:-0.008px;">Nigel Wilson</span>
<span class="t" style="left:894.3px;top:697.84px;font-size:12px;line-height:12px;color:#686664;letter-spacing:-0.259px;">February 9</span>
<span class="t" style="left:1044.3px;top:697.84px;font-size:12px;line-height:12px;color:#686664;letter-spacing:-0.259px;">February 9</span>
<div class="a" style="left:308px;top:726px;width:1563px;height:44px;background:#f3f2f1"></div>
<svg style="left:323px;top:738.9px" width="18" height="18" viewBox="0 0 18 18" ><circle cx="9" cy="9" r="8.3" stroke="#484644" stroke-width="1" fill="#fff"/></svg>
<svg style="left:405px;top:739px" width="18" height="18" viewBox="0 0 18 18" ><path d="M5 0.5 H13.5 L17.5 4.5 V17 Q17.5 17.5 17 17.5 H5 Q4.5 17.5 4.5 17 V1 Q4.5 0.5 5 0.5 Z" fill="#fff" stroke="#8f8d8b" stroke-width="1" stroke-linejoin="round"/><path d="M13.5 0.8 V4 Q13.5 4.5 14 4.5 H17.2" stroke="#8f8d8b" stroke-width="1" fill="none"/><rect x="9.9" y="7" width="6" height="5.9" rx="0.7" fill="#8ccac2"/><path d="M10 14.5 H15.9" stroke="#c8c6c4" stroke-width="0.8"/><rect x="0" y="5" width="10" height="9.9" fill="#26787b"/><text x="5" y="12.95" font-size="8.4" font-weight="400" stroke="#fff" stroke-width="0.2" text-anchor="middle" fill="#fff" font-family="Liberation Sans, sans-serif">S</text></svg>
<span class="t" style="left:444.4px;top:741.15px;font-size:14px;line-height:14px;color:#3b3a38;letter-spacing:-0.289px;">wwww355d.aspx</span>
<svg style="left:635.7px;top:742.8px" width="12.2" height="10.4" viewBox="0 0 12.2 10.4" ><rect x="0.1" y="0.1" width="12" height="10.1" rx="0.5" fill="#e8c678"/><rect x="1" y="0.1" width="10" height="10.1" fill="#dba636"/><rect x="3" y="1.15" width="2.6" height="7.4" fill="#f3f2f1"/><rect x="6.6" y="1.15" width="2.7" height="7.4" fill="#f3f2f1"/></svg>
<svg style="left:661.6px;top:740.2px" width="16" height="13.6" viewBox="0 0 16 13.6" ><path d="M4.6 3.6 H0.6 V13 H12.4 V9.6" stroke="#605e5c" stroke-width="1.05" fill="none"/><path d="M9.6 0.6 L15.2 4.8 L9.6 9 V6.6 C7 6.6 5 7.4 3.6 9.8 C4 6 6.2 3.4 9.6 3 Z" stroke="#605e5c" stroke-width="1.05" fill="none" stroke-linejoin="round"/></svg>
<svg style="left:698.6px;top:746.6px" width="15" height="2.4" viewBox="0 0 15 2.4" ><circle cx="1.1" cy="1.2" r="1" fill="#605e5c"/><circle cx="7.5" cy="1.2" r="1" fill="#605e5c"/><circle cx="13.9" cy="1.2" r="1" fill="#605e5c"/></svg>
<span class="t" style="left:744.4px;top:740.84px;font-size:12px;line-height:12px;color:#686664;letter-spacing:-0.008px;">Nigel Wilson</span>
<span class="t" style="left:894.3px;top:740.84px;font-size:12px;line-height:12px;color:#686664;letter-spacing:-0.259px;">February 9</span>
<span class="t" style="left:1044.3px;top:740.84px;font-size:12px;line-height:12px;color:#686664;letter-spacing:-0.259px;">February 9</span>
<div class="a" style="left:308px;top:812px;width:1563px;height:1px;background:#f3f2f1"></div>
<svg style="left:405px;top:782px" width="18" height="18" viewBox="0 0 18 18" ><path d="M5 0.5 H13.5 L17.5 4.5 V17 Q17.5 17.5 17 17.5 H5 Q4.5 17.5 4.5 17 V1 Q4.5 0.5 5 0.5 Z" fill="#fff" stroke="#8f8d8b" stroke-width="1" stroke-linejoin="round"/><path d="M13.5 0.8 V4 Q13.5 4.5 14 4.5 H17.2" stroke="#8f8d8b" stroke-width="1" fill="none"/><rect x="9.9" y="7" width="6" height="5.9" rx="0.7" fill="#8ccac2"/><path d="M10 14.5 H15.9" stroke="#c8c6c4" stroke-width="0.8"/><rect x="0" y="5" width="10" height="9.9" fill="#26787b"/><text x="5" y="12.95" font-size="8.4" font-weight="400" stroke="#fff" stroke-width="0.2" text-anchor="middle" fill="#fff" font-family="Liberation Sans, sans-serif">S</text></svg>
<span class="t" style="left:444.4px;top:784.15px;font-size:14px;line-height:14px;color:#3b3a38;letter-spacing:-0.091px;">dfdfsdf.aspx</span>
<svg style="left:711.7px;top:785.8px" width="12.2" height="10.4" viewBox="0 0 12.2 10.4" ><rect x="0.1" y="0.1" width="12" height="10.1" rx="0.5" fill="#e8c678"/><rect x="1" y="0.1" width="10" height="10.1" fill="#dba636"/><rect x="3" y="1.15" width="2.6" height="7.4" fill="#fff"/><rect x="6.6" y="1.15" width="2.7" height="7.4" fill="#fff"/></svg>
<span class="t" style="left:744.4px;top:783.84px;font-size:12px;line-height:12px;color:#686664;letter-spacing:-0.008px;">Nigel Wilson</span>
<span class="t" style="left:894.3px;top:783.84px;font-size:12px;line-height:12px;color:#686664;letter-spacing:-0.259px;">February 9</span>
<span class="t" style="left:1044.3px;top:783.84px;font-size:12px;line-height:12px;color:#686664;letter-spacing:-0.259px;">February 9</span>
<div class="a" style="left:308px;top:855px;width:1563px;height:1px;background:#f3f2f1"></div>
<svg style="left:405px;top:825px" width="18" height="18" viewBox="0 0 18 18" ><path d="M5 0.5 H13.5 L17.5 4.5 V17 Q17.5 17.5 17 17.5 H5 Q4.5 17.5 4.5 17 V1 Q4.5 0.5 5 0.5 Z" fill="#fff" stroke="#8f8d8b" stroke-width="1" stroke-linejoin="round"/><path d="M13.5 0.8 V4 Q13.5 4.5 14 4.5 H17.2" stroke="#8f8d8b" stroke-width="1" fill="none"/><rect x="9.9" y="7" width="6" height="5.9" rx="0.7" fill="#8ccac2"/><path d="M10 14.5 H15.9" stroke="#c8c6c4" stroke-width="0.8"/><rect x="0" y="5" width="10" height="9.9" fill="#26787b"/><text x="5" y="12.95" font-size="8.4" font-weight="400" stroke="#fff" stroke-width="0.2" text-anchor="middle" fill="#fff" font-family="Liberation Sans, sans-serif">S</text></svg>
<span class="t" style="left:444.4px;top:827.15px;font-size:14px;line-height:14px;color:#3b3a38;letter-spacing:-0.182px;">dfdfsdfee.aspx</span>
<svg style="left:711.7px;top:828.8px" width="12.2" height="10.4" viewBox="0 0 12.2 10.4" ><rect x="0.1" y="0.1" width="12" height="10.1" rx="0.5" fill="#e8c678"/><rect x="1" y="0.1" width="10" height="10.1" fill="#dba636"/><rect x="3" y="1.15" width="2.6" height="7.4" fill="#fff"/><rect x="6.6" y="1.15" width="2.7" height="7.4" fill="#fff"/></svg>
<span class="t" style="left:744.4px;top:826.84px;font-size:12px;line-height:12px;color:#686664;letter-spacing:-0.008px;">Nigel Wilson</span>
<span class="t" style="left:894.3px;top:826.84px;font-size:12px;line-height:12px;color:#686664;letter-spacing:-0.259px;">February 9</span>
<span class="t" style="left:1044.3px;top:826.84px;font-size:12px;line-height:12px;color:#686664;letter-spacing:-0.259px;">February 9</span>
<div class="a" style="left:308px;top:898px;width:1563px;height:1px;background:#f3f2f1"></div>
<svg style="left:405px;top:868px" width="18" height="18" viewBox="0 0 18 18" ><path d="M5 0.5 H13.5 L17.5 4.5 V17 Q17.5 17.5 17 17.5 H5 Q4.5 17.5 4.5 17 V1 Q4.5 0.5 5 0.5 Z" fill="#fff" stroke="#8f8d8b" stroke-width="1" stroke-linejoin="round"/><path d="M13.5 0.8 V4 Q13.5 4.5 14 4.5 H17.2" stroke="#8f8d8b" stroke-width="1" fill="none"/><rect x="9.9" y="7" width="6" height="5.9" rx="0.7" fill="#8ccac2"/><path d="M10 14.5 H15.9" stroke="#c8c6c4" stroke-width="0.8"/><rect x="0" y="5" width="10" height="9.9" fill="#26787b"/><text x="5" y="12.95" font-size="8.4" font-weight="400" stroke="#fff" stroke-width="0.2" text-anchor="middle" fill="#fff" font-family="Liberation Sans, sans-serif">S</text></svg>
<span class="t" style="left:444.4px;top:870.15px;font-size:14px;line-height:14px;color:#3b3a38;letter-spacing:-0.133px;">dfdfsdfeed.aspx</span>
<svg style="left:711.7px;top:871.8px" width="12.2" height="10.4" viewBox="0 0 12.2 10.4" ><rect x="0.1" y="0.1" width="12" height="10.1" rx="0.5" fill="#e8c678"/><rect x="1" y="0.1" width="10" height="10.1" fill="#dba636"/><rect x="3" y="1.15" width="2.6" height="7.4" fill="#fff"/><rect x="6.6" y="1.15" width="2.7" height="7.4" fill="#fff"/></svg>
<span class="t" style="left:744.4px;top:869.84px;font-size:12px;line-height:12px;color:#686664;letter-spacing:-0.008px;">Nigel Wilson</span>
<span class="t" style="left:894.3px;top:869.84px;font-size:12px;line-height:12px;color:#686664;letter-spacing:-0.259px;">February 9</span>
<span class="t" style="left:1044.3px;top:869.84px;font-size:12px;line-height:12px;color:#686664;letter-spacing:-0.259px;">February 9</span>
<div class="a" style="left:308px;top:941px;width:1563px;height:1px;background:#f3f2f1"></div>
<svg style="left:405px;top:911px" width="18" height="18" viewBox="0 0 18 18" ><path d="M5 0.5 H13.5 L17.5 4.5 V17 Q17.5 17.5 17 17.5 H5 Q4.5 17.5 4.5 17 V1 Q4.5 0.5 5 0.5 Z" fill="#fff" stroke="#8f8d8b" stroke-width="1" stroke-linejoin="round"/><path d="M13.5 0.8 V4 Q13.5 4.5 14 4.5 H17.2" stroke="#8f8d8b" stroke-width="1" fill="none"/><rect x="9.9" y="7" width="6" height="5.9" rx="0.7" fill="#8ccac2"/><path d="M10 14.5 H15.9" stroke="#c8c6c4" stroke-width="0.8"/><rect x="0" y="5" width="10" height="9.9" fill="#26787b"/><text x="5" y="12.95" font-size="8.4" font-weight="400" stroke="#fff" stroke-width="0.2" text-anchor="middle" fill="#fff" font-family="Liberation Sans, sans-serif">S</text></svg>
<span class="t" style="left:444.4px;top:913.15px;font-size:14px;line-height:14px;color:#3b3a38;letter-spacing:-0.123px;">dfdfsdfeed5.aspx</span>
<svg style="left:711.7px;top:914.8px" width="12.2" height="10.4" viewBox="0 0 12.2 10.4" ><rect x="0.1" y="0.1" width="12" height="10.1" rx="0.5" fill="#e8c678"/><rect x="1" y="0.1" width="10" height="10.1" fill="#dba636"/><rect x="3" y="1.15" width="2.6" height="7.4" fill="#fff"/><rect x="6.6" y="1.15" width="2.7" height="7.4" fill="#fff"/></svg>
<span class="t" style="left:744.4px;top:912.84px;font-size:12px;line-height:12px;color:#686664;letter-spacing:-0.008px;">Nigel Wilson</span>
<span class="t" style="left:894.3px;top:912.84px;font-size:12px;line-height:12px;color:#686664;letter-spacing:-0.259px;">February 9</span>
<span class="t" style="left:1044.3px;top:912.84px;font-size:12px;line-height:12px;color:#686664;letter-spacing:-0.259px;">February 9</span>
<div class="a" style="left:308px;top:984px;width:1563px;height:1px;background:#f3f2f1"></div>
<svg style="left:405px;top:954px" width="18" height="18" viewBox="0 0 18 18" ><path d="M5 0.5 H13.5 L17.5 4.5 V17 Q17.5 17.5 17 17.5 H5 Q4.5 17.5 4.5 17 V1 Q4.5 0.5 5 0.5 Z" fill="#fff" stroke="#8f8d8b" stroke-width="1" stroke-linejoin="round"/><path d="M13.5 0.8 V4 Q13.5 4.5 14 4.5 H17.2" stroke="#8f8d8b" stroke-width="1" fill="none"/><rect x="9.9" y="7" width="6" height="5.9" rx="0.7" fill="#8ccac2"/><path d="M10 14.5 H15.9" stroke="#c8c6c4" stroke-width="0.8"/><rect x="0" y="5" width="10" height="9.9" fill="#26787b"/><text x="5" y="12.95" font-size="8.4" font-weight="400" stroke="#fff" stroke-width="0.2" text-anchor="middle" fill="#fff" font-family="Liberation Sans, sans-serif">S</text></svg>
<span class="t" style="left:444.4px;top:956.15px;font-size:14px;line-height:14px;color:#3b3a38;letter-spacing:-0.064px;">dfdfsdfeed5r.aspx</span>
<svg style="left:711.7px;top:957.8px" width="12.2" height="10.4" viewBox="0 0 12.2 10.4" ><rect x="0.1" y="0.1" width="12" height="10.1" rx="0.5" fill="#e8c678"/><rect x="1" y="0.1" width="10" height="10.1" fill="#dba636"/><rect x="3" y="1.15" width="2.6" height="7.4" fill="#fff"/><rect x="6.6" y="1.15" width="2.7" height="7.4" fill="#fff"/></svg>
<span class="t" style="left:744.4px;top:955.84px;font-size:12px;line-height:12px;color:#686664;letter-spacing:-0.008px;">Nigel Wilson</span>
<span class="t" style="left:894.3px;top:955.84px;font-size:12px;line-height:12px;color:#686664;letter-spacing:-0.259px;">February 9</span>
<span class="t" style="left:1044.3px;top:955.84px;font-size:12px;line-height:12px;color:#686664;letter-spacing:-0.259px;">February 9</span>
<div class="a" style="left:308px;top:1027px;width:1563px;height:1px;background:#f3f2f1"></div>
<svg style="left:405px;top:997px" width="18" height="18" viewBox="0 0 18 18" ><path d="M5 0.5 H13.5 L17.5 4.5 V17 Q17.5 17.5 17 17.5 H5 Q4.5 17.5 4.5 17 V1 Q4.5 0.5 5 0.5 Z" fill="#fff" stroke="#8f8d8b" stroke-width="1" stroke-linejoin="round"/><path d="M13.5 0.8 V4 Q13.5 4.5 14 4.5 H17.2" stroke="#8f8d8b" stroke-width="1" fill="none"/><rect x="9.9" y="7" width="6" height="5.9" rx="0.7" fill="#8ccac2"/><path d="M10 14.5 H15.9" stroke="#c8c6c4" stroke-width="0.8"/><rect x="0" y="5" width="10" height="9.9" fill="#26787b"/><text x="5" y="12.95" font-size="8.4" font-weight="400" stroke="#fff" stroke-width="0.2" text-anchor="middle" fill="#fff" font-family="Liberation Sans, sans-serif">S</text></svg>
<span class="t" style="left:444.4px;top:999.15px;font-size:14px;line-height:14px;color:#3b3a38;letter-spacing:-0.22px;">simpletest.aspx</span>
<svg style="left:711.7px;top:1000.8px" width="12.2" height="10.4" viewBox="0 0 12.2 10.4" ><rect x="0.1" y="0.1" width="12" height="10.1" rx="0.5" fill="#e8c678"/><rect x="1" y="0.1" width="10" height="10.1" fill="#dba636"/><rect x="3" y="1.15" width="2.6" height="7.4" fill="#fff"/><rect x="6.6" y="1.15" width="2.7" height="7.4" fill="#fff"/></svg>
<span class="t" style="left:744.4px;top:998.84px;font-size:12px;line-height:12px;color:#686664;letter-spacing:-0.008px;">Nigel Wilson</span>
<span class="t" style="left:894.3px;top:998.84px;font-size:12px;line-height:12px;color:#686664;letter-spacing:-0.26px;">February 12</span>
<span class="t" style="left:1044.3px;top:998.84px;font-size:12px;line-height:12px;color:#686664;letter-spacing:-0.26px;">February 12</span>
</section>
</body></html>
